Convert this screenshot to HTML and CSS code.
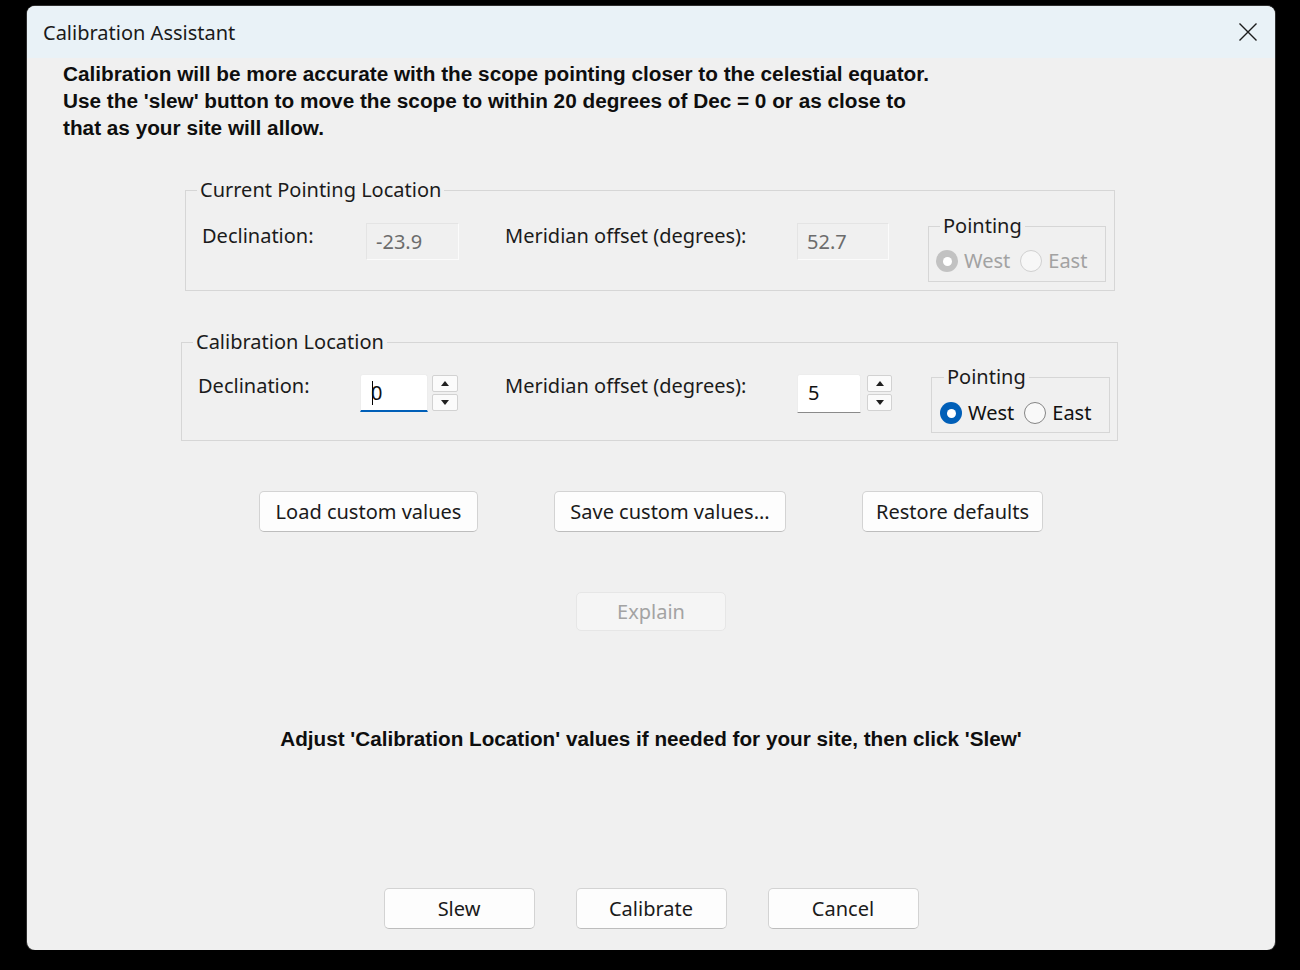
FILE: index.html
```html
<!DOCTYPE html>
<html>
<head>
<meta charset="utf-8">
<title>Calibration Assistant</title>
<link rel="stylesheet" href="styles.css">
</head>
<body>
<div class="window">
  <div class="titlebar">
    <span class="title">Calibration Assistant</span>
    <span class="close" aria-label="Close">
      <svg width="20" height="20" viewBox="0 0 20 20"><path d="M1.5 1.5 L18.5 18.5 M18.5 1.5 L1.5 18.5" stroke="#1c1c1c" stroke-width="1.4" fill="none"/></svg>
    </span>
  </div>
  <div class="content">
    <p class="intro">Calibration will be more accurate with the scope pointing closer to the celestial equator.<br>Use the 'slew' button to move the scope to within 20 degrees of Dec = 0 or as close to<br>that as your site will allow.</p>

    <fieldset class="group group-current">
      <legend>Current Pointing Location</legend>
      <div class="row">
        <span class="label lbl-dec">Declination:</span>
        <div class="ro ro-dec">-23.9</div>
        <span class="label lbl-mer">Meridian offset (degrees):</span>
        <div class="ro ro-mer">52.7</div>
        <fieldset class="pointing pointing-current">
          <legend>Pointing</legend>
          <div class="radios">
            <span class="radio disabled"><span class="dot checked"></span>West</span>
            <span class="radio disabled"><span class="dot"></span>East</span>
          </div>
        </fieldset>
      </div>
    </fieldset>

    <fieldset class="group group-calib">
      <legend>Calibration Location</legend>
      <div class="row">
        <span class="label lbl-dec2">Declination:</span>
        <div class="edit edit-dec focused"><span class="caret"></span>0</div>
        <div class="spin spin-dec">
          <span class="spin-btn"><span class="tri up"></span></span>
          <span class="spin-btn"><span class="tri down"></span></span>
        </div>
        <span class="label lbl-mer2">Meridian offset (degrees):</span>
        <div class="edit edit-mer">5</div>
        <div class="spin spin-mer">
          <span class="spin-btn"><span class="tri up"></span></span>
          <span class="spin-btn"><span class="tri down"></span></span>
        </div>
        <fieldset class="pointing pointing-calib">
          <legend>Pointing</legend>
          <div class="radios">
            <span class="radio"><span class="dot checked"></span>West</span>
            <span class="radio"><span class="dot"></span>East</span>
          </div>
        </fieldset>
      </div>
    </fieldset>

    <div class="btn-row custom-row">
      <button class="btn btn-load">Load custom values</button>
      <button class="btn btn-save">Save custom values...</button>
      <button class="btn btn-restore">Restore defaults</button>
    </div>

    <div class="btn-row explain-row">
      <button class="btn btn-explain" disabled>Explain</button>
    </div>

    <p class="hint">Adjust 'Calibration Location' values if needed for your site, then click 'Slew'</p>

    <div class="btn-row action-row">
      <button class="btn btn-action">Slew</button>
      <button class="btn btn-action">Calibrate</button>
      <button class="btn btn-action">Cancel</button>
    </div>
  </div>
</div>
</body>
</html>
```

FILE: styles.css
```css
html, body {
  margin: 0;
  padding: 0;
  background: #000;
}

body {
  font-family: "Noto Sans", "Open Sans", sans-serif;
  font-size: 20px;
  color: #1b1b1b;
}

.window {
  margin: 6px 0 0 27px;
  width: 1248px;
  height: 944px;
  background: #f0f0f0;
  border-radius: 8px;
  overflow: hidden;
  box-shadow: 0 0 0 1px #2e2e2e;
}

.titlebar {
  box-sizing: border-box;
  height: 52px;
  background: #e9f2f7;
  display: flex;
  align-items: center;
  justify-content: space-between;
  padding: 0 17px 0 16px;
}

.title {
  font-size: 20px;
  color: #1a1a1a;
}

.close {
  display: flex;
  width: 20px;
  height: 20px;
}

.intro {
  margin: 2px 0 0 36px;
  font-family: "Liberation Sans", Arial, sans-serif;
  font-weight: 700;
  font-size: 20.75px;
  line-height: 27px;
  color: #0e0e0e;
}

/* group boxes */
fieldset {
  margin: 0;
  padding: 0;
  min-width: 0;
  box-sizing: border-box;
  border: 1px solid #d6d6d6;
}

legend {
  padding: 0 3px;
  line-height: 26px;
  font-size: 20px;
  color: #1b1b1b;
}

.group-current {
  margin: 36px 0 0 158px;
  width: 930px;
  padding-bottom: 8px;
}

.group-current > legend {
  margin-left: 11px;
}

.group-calib {
  margin: 38px 0 0 154px;
  width: 937px;
  padding-bottom: 7px;
}

.group-calib > legend {
  margin-left: 11px;
}

.row {
  display: flex;
  align-items: flex-start;
  padding-left: 16px;
}

.group-current .row {
  padding-top: 10px;
}

.group-calib .row {
  padding-top: 9px;
}

.label {
  line-height: 26px;
  white-space: nowrap;
}

.lbl-dec { margin-top: 10px; width: 164px; }
.lbl-mer { margin-top: 10px; margin-left: 46px; width: 292px; }
.lbl-dec2 { margin-top: 9px; width: 162px; }
.lbl-mer2 { margin-top: 9px; margin-left: 47px; width: 292px; }

/* read-only boxes */
.ro {
  box-sizing: border-box;
  height: 37px;
  margin-top: 10px;
  border: 1px solid #fbfbfb;
  border-top-color: #e4e4e4;
  border-left-color: #e4e4e4;
  padding-left: 9px;
  line-height: 35px;
  color: #6c6c6c;
}

.ro-dec { width: 93px; }
.ro-mer { width: 92px; }

/* edit boxes */
.edit {
  box-sizing: border-box;
  margin-top: 10px;
  background: #fff;
  border: 1px solid #ededed;
  border-bottom: 1px solid #8a8a8a;
  border-radius: 3px 3px 0 0;
  padding-left: 10px;
  line-height: 36px;
  color: #111;
}

.edit-dec {
  width: 68px;
  height: 38px;
}

.edit-dec.focused {
  border-bottom: 2px solid #005fb8;
}

.edit-mer {
  width: 64px;
  height: 39px;
}

.caret {
  display: inline-block;
  width: 1px;
  height: 24px;
  background: #000;
  vertical-align: -5px;
  margin-right: -2px;
  margin-left: 1px;
}

.spin {
  margin-top: 11px;
  display: flex;
  flex-direction: column;
  gap: 2px;
}

.spin-dec { margin-left: 4px; width: 26px; }
.spin-mer { margin-left: 6px; width: 25px; }

.spin-btn {
  box-sizing: border-box;
  height: 17px;
  border: 1px solid #d2d2d2;
  border-radius: 2px;
  background: #fbfbfb;
  display: flex;
  align-items: center;
  justify-content: center;
}

.tri {
  width: 0;
  height: 0;
  border-left: 4px solid transparent;
  border-right: 4px solid transparent;
}

.tri.up { border-bottom: 5px solid #202020; }
.tri.down { border-top: 5px solid #202020; }

/* pointing group */
.pointing-current {
  margin-left: 39px;
  width: 178px;
  padding-left: 7px;
  padding-bottom: 7px;
}

.pointing-current > legend { margin-left: 4px; }

.pointing-calib {
  margin-left: 39px;
  width: 179px;
  padding-left: 8px;
  padding-bottom: 6px;
}

.pointing-calib > legend { margin-left: 4px; }

.radios {
  display: flex;
  align-items: center;
  gap: 10px;
  height: 26px;
}

.pointing-current .radios { margin-top: 9px; }
.pointing-calib .radios { margin-top: 10px; }

.radio {
  display: flex;
  align-items: center;
  gap: 6px;
  line-height: 26px;
  color: #111;
}

.radio.disabled {
  color: #a2a2a2;
}

.dot {
  box-sizing: border-box;
  width: 22px;
  height: 22px;
  border-radius: 50%;
  border: 1px solid #858585;
  background: #f9f9f9;
  display: flex;
  align-items: center;
  justify-content: center;
}

.dot.checked {
  border: none;
  background: #005fb8;
}

.dot.checked::after {
  content: "";
  width: 9px;
  height: 9px;
  border-radius: 50%;
  background: #fff;
}

.radio.disabled .dot {
  border-color: #d0d0d0;
  background: #f7f7f7;
}

.radio.disabled .dot.checked {
  background: #c2c2c2;
}

/* buttons */
.btn-row {
  display: flex;
  justify-content: center;
}

.btn {
  box-sizing: border-box;
  font-family: inherit;
  font-size: 20px;
  color: #1a1a1a;
  background: #fdfdfd;
  border: 1px solid #d3d3d3;
  border-bottom-color: #bdbdbd;
  border-radius: 5px;
  padding: 0;
  margin: 0;
}

.custom-row {
  margin-top: 50px;
  gap: 76px;
}

.custom-row .btn { height: 41px; }
.btn-load { width: 219px; }
.btn-save { width: 232px; }
.btn-restore { width: 181px; }

.explain-row {
  margin-top: 60px;
}

.btn-explain {
  width: 150px;
  height: 39px;
  background: #f5f5f5;
  border-color: #e6e6e6;
  color: #a3a3a3;
}

.hint {
  margin: 95px 0 0;
  text-align: center;
  font-family: "Liberation Sans Narrow", "Liberation Sans", Arial, sans-serif;
  font-weight: 700;
  font-size: 20.7px;
  line-height: 26px;
  color: #0e0e0e;
}

.action-row {
  margin-top: 136px;
  gap: 41px;
}

.btn-action {
  width: 151px;
  height: 41px;
}
```
